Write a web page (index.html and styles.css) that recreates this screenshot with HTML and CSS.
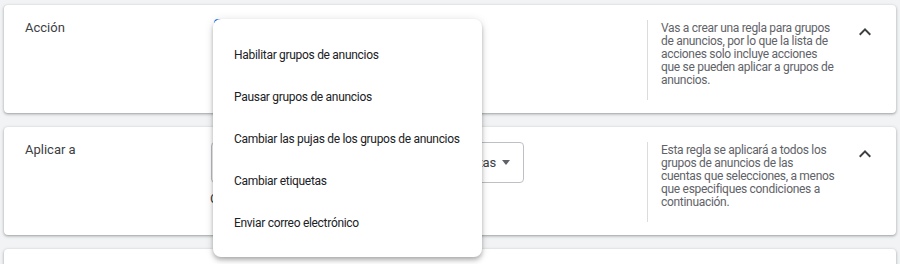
FILE: index.html
```html
<!DOCTYPE html>
<html lang="es">
<head>
<meta charset="utf-8">
<title>Regla</title>
<link rel="stylesheet" href="styles.css">
</head>
<body>
<div class="page">
  <section class="card">
    <div class="label">Acción</div>
    <div class="control">
      <div class="select select-focused"></div>
      <ul class="menu">
        <li>Habilitar grupos de anuncios</li>
        <li>Pausar grupos de anuncios</li>
        <li>Cambiar las pujas de los grupos de anuncios</li>
        <li>Cambiar etiquetas</li>
        <li>Enviar correo electrónico</li>
      </ul>
    </div>
    <div class="divider"></div>
    <p class="desc">Vas a crear una regla para grupos de anuncios, por lo que la lista de acciones solo incluye acciones que se pueden aplicar a grupos de anuncios.</p>
    <svg class="chevron" viewBox="0 0 24 24" width="24" height="24"><path d="M12 8l-6 6 1.41 1.41L12 10.83l4.59 4.58L18 14z"/></svg>
  </section>
  <section class="card">
    <div class="label">Aplicar a</div>
    <div class="control">
      <div class="select"><span class="value">Todos los grupos de anuncios de las cuentas</span><span class="arrow"></span></div>
      <div class="helper">Cuentas seleccionadas: 1</div>
    </div>
    <div class="divider"></div>
    <p class="desc">Esta regla se aplicará a todos los grupos de anuncios de las cuentas que selecciones, a menos que especifiques condiciones a continuación.</p>
    <svg class="chevron" viewBox="0 0 24 24" width="24" height="24"><path d="M12 8l-6 6 1.41 1.41L12 10.83l4.59 4.58L18 14z"/></svg>
  </section>
  <section class="card">
    <div class="label"></div>
    <div class="control"></div>
    <div class="divider"></div>
    <p class="desc"></p>
  </section>
</div>
</body>
</html>
```

FILE: styles.css
```css
* { box-sizing: border-box; }
html, body { margin: 0; padding: 0; }
body {
  background: #f1f3f4;
  font-family: Roboto, "Liberation Sans", Arial, sans-serif;
  color: #3c4043;
  overflow: hidden;
  height: 264px;
}
.page {
  padding: 5px 4px;
  display: flex;
  flex-direction: column;
  gap: 14px;
}
.card {
  background: #fff;
  border-radius: 4px;
  box-shadow: 0 1px 2px 0 rgba(60,64,67,.3), 0 1px 3px 1px rgba(60,64,67,.15);
  height: 108px;
  flex-shrink: 0;
  padding: 15px 17px 13px 21px;
  display: flex;
  align-items: flex-start;
}
.label {
  width: 186px;
  font-size: 13px;
  line-height: 16px;
  color: #3c4043;
  flex-shrink: 0;
}
.control {
  position: relative;
  width: 436px;
  flex-shrink: 0;
}
.select {
  width: 313px;
  height: 41px;
  border: 1px solid #bdc1c6;
  border-radius: 4px;
  display: flex;
  align-items: center;
  justify-content: flex-end;
  padding: 0 13px 0 14px;
  overflow: hidden;
  font-size: 13px;
  color: #3c4043;
}
.select-focused {
  width: 240px;
  border: 2px solid #1a73e8;
  margin-left: 3px;
  margin-top: -1px;
}
.value { white-space: nowrap; letter-spacing: -0.2px; }
.arrow {
  width: 0;
  height: 0;
  border-left: 4.5px solid transparent;
  border-right: 4.5px solid transparent;
  border-top: 5px solid #5f6368;
  margin-left: 6px;
  flex-shrink: 0;
}
.helper {
  font-size: 13px;
  line-height: 16px;
  margin-top: 8px;
  margin-left: -1px;
  color: #3c4043;
  white-space: nowrap;
}
.menu {
  position: absolute;
  z-index: 10;
  left: 2px;
  top: -1px;
  width: 269px;
  margin: 0;
  padding: 15px 0 13px;
  list-style: none;
  background: #fff;
  border-radius: 8px;
  box-shadow: 0 2px 4px -1px rgba(0,0,0,.2), 0 4px 5px 0 rgba(0,0,0,.14), 0 1px 10px 0 rgba(0,0,0,.12);
}
.menu li {
  height: 42px;
  display: flex;
  align-items: center;
  padding-left: 21px;
  font-size: 12px;
  letter-spacing: -0.3px;
  color: #202124;
  white-space: nowrap;
}
.divider {
  width: 1px;
  align-self: stretch;
  background: #dadce0;
  flex-shrink: 0;
}
.desc {
  margin: 2px 0 0 13px;
  width: 175px;
  flex-shrink: 0;
  font-size: 12px;
  letter-spacing: -0.3px;
  line-height: 13px;
  color: #5f6368;
}
.chevron {
  margin-left: 17px;
  margin-top: 0;
  fill: #3c4043;
  flex-shrink: 0;
}
```
